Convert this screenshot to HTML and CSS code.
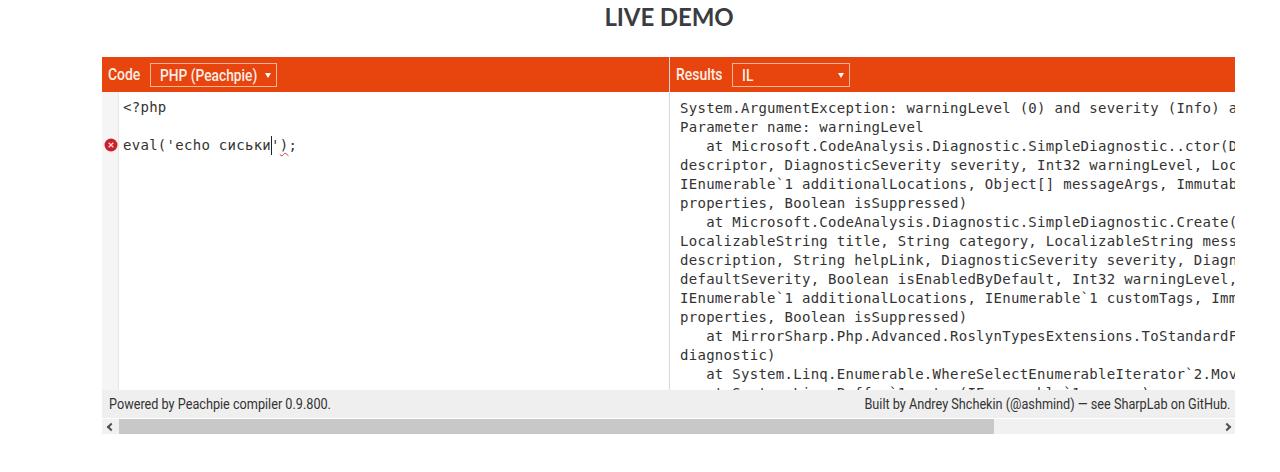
FILE: index.html
```html
<!DOCTYPE html>
<html lang="en">
<head>
<meta charset="utf-8">
<title>Live demo</title>
<link rel="stylesheet" href="styles.css">
</head>
<body>
<h1 class="title">LIVE DEMO</h1>
<div class="frame">
  <div class="panels">
    <section class="panel panel-code">
      <header class="bar">
        <span class="bar-label">Code</span>
        <span class="select select-code"><span class="select-text">PHP (Peachpie)</span><span class="caret"></span></span>
      </header>
      <div class="editor">
        <div class="gutter">
          <svg class="err" viewBox="0 0 14 14" width="14" height="14"><circle cx="7" cy="7" r="6.5" fill="#c9202c"/><path d="M4.7 4.7l4.6 4.6M9.3 4.7l-4.6 4.6" stroke="#f6d5d5" stroke-width="1.3"/></svg>
        </div>
<pre class="code"><span class="code-line">&lt;?php</span>
<span class="code-line"> </span>
<span class="code-line">eval('echo сиськи<span class="cursor"></span>'<span class="squiggle">)</span>;</span></pre>
      </div>
    </section>
    <section class="panel panel-results">
      <header class="bar">
        <span class="bar-label">Results</span>
        <span class="select select-results"><span class="select-text">IL</span><span class="caret"></span></span>
      </header>
<pre class="output">System.ArgumentException: warningLevel (0) and severity (Info) are not valid
Parameter name: warningLevel
   at Microsoft.CodeAnalysis.Diagnostic.SimpleDiagnostic..ctor(DiagnosticDescriptor
descriptor, DiagnosticSeverity severity, Int32 warningLevel, Location location,
IEnumerable`1 additionalLocations, Object[] messageArgs, ImmutableDictionary`2
properties, Boolean isSuppressed)
   at Microsoft.CodeAnalysis.Diagnostic.SimpleDiagnostic.Create(String id,
LocalizableString title, String category, LocalizableString message, LocalizableString
description, String helpLink, DiagnosticSeverity severity, DiagnosticSeverity
defaultSeverity, Boolean isEnabledByDefault, Int32 warningLevel, Location location,
IEnumerable`1 additionalLocations, IEnumerable`1 customTags, ImmutableDictionary`2
properties, Boolean isSuppressed)
   at MirrorSharp.Php.Advanced.RoslynTypesExtensions.ToStandardFormat(Diagnostic
diagnostic)
   at System.Linq.Enumerable.WhereSelectEnumerableIterator`2.MoveNext()
   at System.Linq.Buffer`1..ctor(IEnumerable`1 source)</pre>
    </section>
  </div>
  <footer class="foot">
    <span>Powered by Peachpie compiler 0.9.800.</span>
    <span>Built by Andrey Shchekin (@ashmind) — see SharpLab on GitHub.</span>
  </footer>
  <div class="scrollbar">
    <span class="arrow arrow-left"></span>
    <div class="track"><div class="thumb"></div></div>
    <span class="arrow arrow-right"></span>
  </div>
</div>
</body>
</html>
```
FILE: styles.css
```css
html, body { margin: 0; padding: 0; background: #fff; }
body { height: 472px; overflow: hidden; font-family: Roboto, "Liberation Sans", sans-serif; }
.title {
  margin: 0; height: 57px; padding-top: 3px; box-sizing: border-box;
  text-align: center; font: 700 24px/28px Lato, sans-serif; color: #3a3c42;
  letter-spacing: -0.1px; padding-left: 58px;
}
.frame { margin: 0 45px 0 102px; width: 1133px; }
.panels { display: flex; height: 333px; overflow: hidden; }
.panel { display: flex; flex-direction: column; min-width: 0; overflow: hidden; }
.panel-code { width: 567px; flex: none; }
.panel-results { flex: 1; border-left: 1px solid #d8d8d8; }
.bar {
  flex: none; height: 35px; background: #e8440e; color: #fbeee6;
  display: flex; align-items: center; font-size: 17px;
}
.panel-code .bar { padding-left: 6px; gap: 9px; }
.panel-results .bar { padding-left: 6px; gap: 9px; }
.bar-label { font-weight: 500; transform: scaleX(0.82); transform-origin: left; width: 33px; white-space: nowrap; padding-bottom: 2px; }
.panel-results .bar-label { width: 47px; }
.select {
  display: flex; align-items: center; justify-content: space-between; box-sizing: border-box;
  height: 24px; border: 1px solid #f5b896; padding: 0 5px 0 9px; font-size: 16px; font-weight: 500; color: #fbeee6;
  white-space: nowrap; margin-top: 1px;
}
.select-text { width: 100px; transform: scaleX(0.86); transform-origin: left; }
.select-code { width: 127px; }
.select-results { width: 118px; }
.caret { width: 0; height: 0; border-left: 3px solid transparent; border-right: 3px solid transparent; border-top: 5px solid #fff; }
.editor { flex: 1; display: flex; min-height: 0; }
.gutter { width: 16px; flex: none; background: #f5f5f5; border-right: 1px solid #e6e6e6; position: relative; }
.err { position: absolute; left: 2px; top: 46px; }
.code, .output {
  margin: 0; font-family: "DejaVu Sans Mono", monospace; color: #333; white-space: pre;
  font-size: 14px; line-height: 19px; letter-spacing: 0.28px;
}
.code { padding: 6px 0 0 4px; }
.code-line { display: inline-block; min-height: 19px; }
.cursor { display: inline-block; width: 1px; height: 19px; margin-right: -1px; background: #222; vertical-align: -5px; }
.squiggle { text-decoration: underline wavy #d04040 1px; text-underline-offset: 2px; }
.output { flex: 1; padding: 7px 0 0 10px; overflow: hidden; background: #fff; }
.foot {
  height: 28px; background: #efefef; color: #333; display: flex; justify-content: space-between; align-items: center;
  padding: 0 5px 0 7px; font-size: 14px; position: relative; margin-bottom: 1px;
}
.foot span { white-space: nowrap; transform: scaleX(0.905); transform-origin: left; }
.foot span:last-child { transform-origin: right; }
.scrollbar { display: flex; height: 15px; background: #f1f1f1; align-items: center; }
.arrow { width: 17px; flex: none; display: flex; justify-content: center; align-items: center; }
.arrow::before { content: ""; width: 6px; height: 6px; border-left: 2px solid #505050; border-bottom: 2px solid #505050; box-sizing: border-box; }
.arrow-left::before { transform: rotate(45deg); }
.arrow-right::before { transform: rotate(225deg); }
.track { flex: 1; height: 15px; }
.thumb { width: 875px; height: 15px; background: #c8c8c8; }
```
